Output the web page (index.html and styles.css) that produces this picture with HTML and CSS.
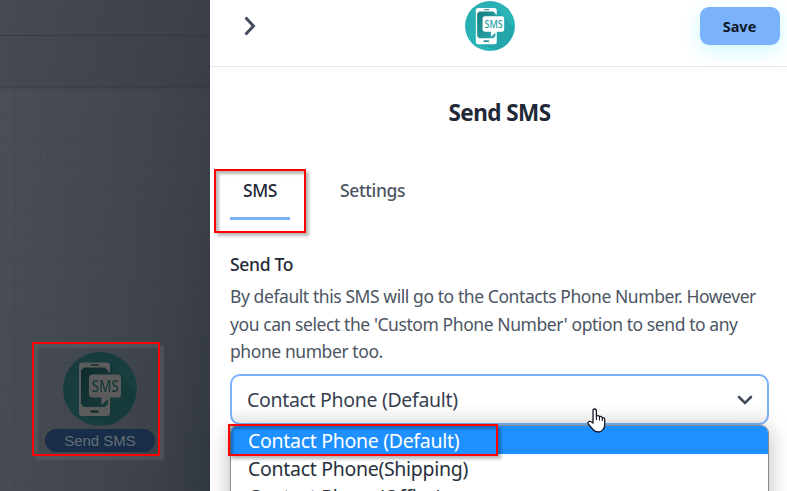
FILE: index.html
```html
<!DOCTYPE html>
<html lang="en">
<head>
<meta charset="utf-8">
<title>Send SMS</title>
<link rel="stylesheet" href="styles.css">
</head>
<body>
<svg class="defs" width="0" height="0">
  <defs>
    <linearGradient id="teal" x1="0" y1="0" x2="1" y2="1"><stop offset="0" stop-color="#29adb0"/><stop offset="1" stop-color="#2bb9bd"/></linearGradient>
    <linearGradient id="screen" x1="0" y1="0" x2="1" y2="1"><stop offset="0" stop-color="#157d82"/><stop offset="1" stop-color="#30a9ac"/></linearGradient>
    <symbol id="sms" viewBox="0 0 74 74">
      <circle cx="37" cy="37" r="37" fill="url(#teal)"/>
      <path d="M47 12 58 24 73 39A37 37 0 0 1 46 73L22 64H47Z" fill="#1d979b" opacity=".5"/>
      <rect x="16" y="10.5" width="31" height="53.5" rx="3.5" fill="#fff"/>
      <path d="M21 15.5H42L45 18.5V52L42 55H21L18 52V18.5Z" fill="url(#screen)"/>
      <path d="M28 13H36" stroke="#20898d" stroke-width="1.5"/>
      <path d="M27.500 59.500H35.500" stroke="#20898d" stroke-width="2.500"/>
      <path d="M44 20H49V27H44Z" fill="#239a9e"/>
      <path d="M29.500 22.500H54.500Q58 22.500 58 26V42Q58 45.500 54.500 45.500H46.500L38.500 53V45.500H29.500Q26 45.500 26 42V26Q26 22.500 29.500 22.500Z" fill="#fff"/>
      <text class="sms-glyph" x="42.300" y="39.800" text-anchor="middle" textLength="27" lengthAdjust="spacingAndGlyphs">SMS</text>
    </symbol>
  </defs>
</svg>
<aside class="canvas">
  <div class="canvas-bar"></div>
  <div class="canvas-bar second"></div>
  <div class="grid"></div>
  <div class="node">
    <svg width="74" height="74"><use href="#sms"/></svg>
    <span class="node-label">Send SMS</span>
  </div>
</aside>
<main class="panel">
  <header class="head">
    <svg class="back" width="14" height="20" viewBox="0 0 14 20"><path d="M2.500 1.500 10.500 10 2.500 18.500" fill="none" stroke="#424c5b" stroke-width="3" stroke-linecap="butt" stroke-linejoin="miter"/></svg>
    <svg class="logo" width="50" height="50"><use href="#sms"/></svg>
    <button class="save">Save</button>
  </header>
  <section class="content">
    <h1>Send SMS</h1>
    <nav class="tabs"><span class="tab active">SMS</span><span class="tab settings">Settings</span></nav>
    <h2>Send To</h2>
    <p>By default this SMS will go to the Contacts Phone Number. However<br>you can select the 'Custom Phone Number' option to send to any<br>phone number too.</p>
    <div class="select"><span>Contact Phone (Default)</span>
      <svg width="16" height="10" viewBox="0 0 16 10"><path d="M2 2 8 8 14 2" fill="none" stroke="#424c5b" stroke-width="2.600" stroke-linecap="round"/></svg>
    </div>
    <div class="menu">
      <div class="option chosen">Contact Phone (Default)</div>
      <div class="option">Contact Phone(Shipping)</div>
      <div class="option">Contact Phone(Office)</div>
    </div>
  </section>
</main>
<div class="mark mark-node"></div>
<div class="mark mark-tab"></div>
<div class="mark mark-option"></div>
<svg class="cursor" width="20" height="26" viewBox="0 0 20 26"><path d="M6 15V3Q6 1 7.700 1T9.400 3V8Q11.500 6.800 12.500 8.700Q14.500 7.800 15.300 9.700Q17.700 9.200 17.700 12V17Q17.700 20 16 21.500Q14.500 24 11.500 24Q8 24 6 21.500L1.200 16Q.5 14.300 2 13.500Q3.500 13 6 15Z" fill="#fff" stroke="#16162a" stroke-width="1.300" stroke-linejoin="round"/><path d="M9.400 8V12M12.500 8.700V12.500M15.300 9.700V13" stroke="#16162a" stroke-width="1.100"/></svg>
</body>
</html>
```

FILE: styles.css
```css
* { box-sizing: border-box; }
body { margin: 0; width: 787px; height: 491px; overflow: hidden; display: flex; position: relative; background: #fff; font-family: "Noto Sans", "Open Sans", sans-serif; color: #1f2937; }
.defs { position: absolute; }
.sms-glyph { font: 500 16px "Noto Sans", sans-serif; fill: #279ea2; }

.canvas { width: 210px; height: 491px; flex: none; overflow: hidden; display: flex; flex-direction: column; background: linear-gradient(98deg, #4a4f58 0%, #41464e 60%, #3c4149 80%, #32383f 100%); }
.canvas-bar { height: 36px; flex: none; border-bottom: 1px solid rgba(40, 45, 53, .35); background: rgba(40, 46, 55, .14); }
.canvas-bar.second { height: 51px; border-bottom: 1px solid rgba(40, 45, 53, .25); box-shadow: 0 1px 3px rgba(30, 35, 43, .2); }
.grid { flex: none; height: 404px; margin-bottom: -404px; background-image: linear-gradient(90deg, rgba(35, 42, 50, .1) 1px, transparent 1px), linear-gradient(rgba(35, 42, 50, .1) 1px, transparent 1px); background-size: 25px 25px; background-position: 15px 0; }
.node { margin: 265px 0 0 45px; width: 110px; display: flex; flex-direction: column; align-items: center; }
.node svg { filter: brightness(.36) saturate(.75); display: block; }
.node-label { margin-top: 3px; width: 110px; height: 23px; border-radius: 12px; background: #182d47; color: #666d77; text-align: center; font: 15px/23px "Liberation Sans", sans-serif; }

.panel { width: 577px; flex: none; }
.head { height: 67px; border-bottom: 1px solid #e5e7eb; display: flex; align-items: flex-start; padding: 1px 7px 0 33px; }
.back { margin-top: 15px; }
.logo { margin-left: 208px; }
.save { margin: 6px 0 0 auto; width: 80px; height: 38px; padding: 0 1px 0 0; border: 0; border-radius: 9px; background: #7ab2fb; color: #111827; font: 700 14.5px "Noto Sans", sans-serif; box-shadow: 0 6px 18px rgba(103, 232, 249, .32); }
.content { padding: 0 18px 0 20px; }
h1 { margin: 30px 0 0; font-size: 22.5px; line-height: 32px; font-weight: 700; text-align: center; letter-spacing: -.55px; }
.tabs { display: flex; height: 45px; margin-top: 46px; align-items: flex-start; }
.tab { font-size: 17.5px; line-height: 30px; font-weight: 500; color: #4b5563; white-space: nowrap; letter-spacing: -.38px; }
.tab.active { width: 60px; height: 45px; text-align: center; color: #1f2937; border-bottom: 3px solid #7ab2fb; }
.settings { margin-left: 50px; }
h2 { margin: 31px 0 0; font-size: 17.5px; line-height: 26px; font-weight: 500; letter-spacing: -.3px; }
p { margin: 6px 0 0; font-size: 17.5px; line-height: 27.5px; color: #4b5563; white-space: nowrap; letter-spacing: -.42px; }
.select { margin-top: 8px; width: 539px; height: 51px; border: 2px solid #7ab2fb; border-radius: 10px; display: flex; align-items: center; justify-content: space-between; padding: 0 14px 0 15px; font-size: 19.5px; letter-spacing: -.32px; color: #374151; background: linear-gradient(#fff 60%, #f5f5f5); }
.select svg { margin-top: 2px; }
.menu { width: 539px; height: 90px; border: 1px solid #8a8a8a; border-radius: 8px 8px 0 0; overflow: hidden; background: #fff; box-shadow: 0 4px 22px rgba(0, 0, 0, .28); }
.option { height: 28px; line-height: 30px; padding-left: 17px; font-size: 19.5px; letter-spacing: -.3px; white-space: nowrap; color: #27303d; }
.chosen { background: #1e90ff; color: #fff; }

.mark { position: absolute; border: 2px solid #f00; box-shadow: 3px 3px 3px rgba(0, 0, 0, .28), inset 3px 3px 3px rgba(0, 0, 0, .28); }
.mark-node { left: 32px; top: 342px; width: 128px; height: 114px; box-shadow: 4px 4px 2px rgba(102, 108, 105, .4), inset 4px 4px 2px rgba(102, 108, 105, .4); }
.mark-tab { left: 214px; top: 169px; width: 92px; height: 64px; }
.mark-option { left: 228px; top: 424px; width: 270px; height: 32px; }
.cursor { position: absolute; left: 587px; top: 408px; }
```
